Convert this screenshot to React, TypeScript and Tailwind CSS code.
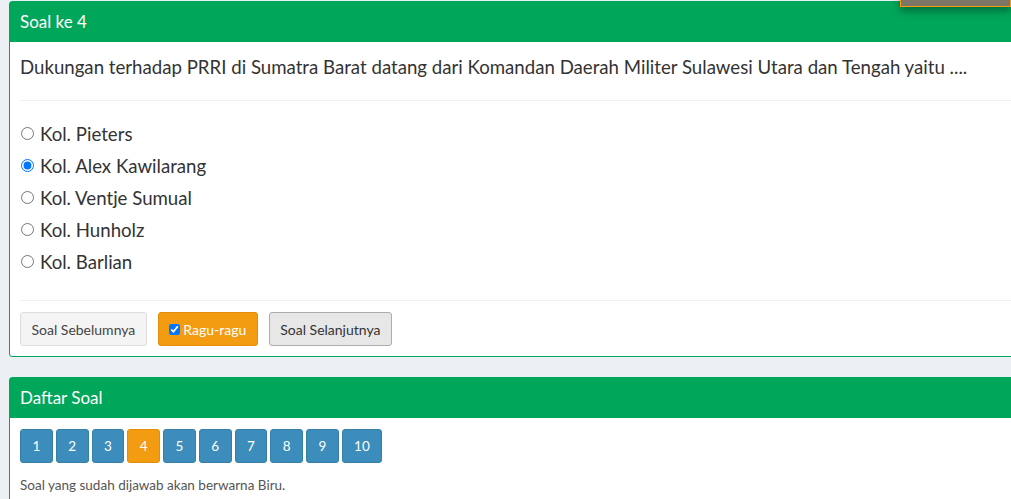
const options = [
  "Kol. Pieters",
  "Kol. Alex Kawilarang",
  "Kol. Ventje Sumual",
  "Kol. Hunholz",
  "Kol. Barlian",
];

const numbers = [1, 2, 3, 4, 5, 6, 7, 8, 9, 10];

export default function App() {
  return (
    <div
      className="relative h-[499px] w-[1011px] overflow-hidden bg-[#ecf0f5] text-[#333]"
      style={{ fontFamily: "Lato, 'Open Sans', sans-serif" }}
    >
      {/* soal */}
      <div className="ml-[9px] mt-px w-[1100px] rounded-[3px] border border-[#00a65a] bg-white">
        <div className="flex h-[40px] items-center bg-[#00a65a] px-[10px] text-[17px] text-white">
          Soal ke 4
        </div>
        <div className="px-[10px] pt-[12px]">
          <p className="text-[18.65px] leading-[26px]">
            Dukungan terhadap PRRI di Sumatra Barat datang dari Komandan Daerah Militer Sulawesi Utara dan Tengah yaitu ....
          </p>
          <div className="mt-[20px] border-t border-[#f0f0f0]" />
          <div className="flex flex-col pt-[18px] pb-[21px]">
            {options.map((o, i) => (
              <label key={o} className="flex h-[32px] items-center gap-[6px] text-[18.65px]">
                <input
                  type="radio"
                  name="jawab"
                  defaultChecked={i === 1}
                  className="m-0 ml-[1px] h-[13px] w-[13px] -translate-y-[2px]"
                />
                {o}
              </label>
            ))}
          </div>
          <div className="border-t border-[#f0f0f0]" />
          <div className="flex gap-[11px] pt-[11px] pb-[10px] text-[14px]">
            <button className="h-[34px] rounded-[3px] border border-[#ddd] bg-[#f4f4f4] px-[10.5px] text-[#444]">
              Soal Sebelumnya
            </button>
            <button className="flex h-[34px] items-center gap-[3px] rounded-[3px] border border-[#e08e0b] bg-[#f39c12] px-[10.5px] text-white">
              <input type="checkbox" defaultChecked className="m-0 h-[11px] w-[11px]" />
              Ragu-ragu
            </button>
            <button className="h-[34px] rounded-[3px] border border-[#adadad] bg-[#e7e7e7] px-[10.5px] text-[#333]">
              Soal Selanjutnya
            </button>
          </div>
        </div>
      </div>

      {/* daftar soal */}
      <div className="ml-[9px] mt-[20px] w-[1100px] rounded-[3px] border border-[#00a65a] bg-white">
        <div className="flex h-[40px] items-center bg-[#00a65a] px-[10px] text-[17px] text-white">
          Daftar Soal
        </div>
        <div className="px-[10px] pt-[11px] pb-[10px]">
          <div className="flex gap-[3px]">
            {numbers.map((n) => (
              <div
                key={n}
                className={
                  n === 4
                    ? "flex h-[34px] w-[32.78px] items-center justify-center rounded-[3px] border border-[#e08e0b] bg-[#f39c12] text-[13.5px] text-white"
                    : n === 10
                      ? "flex h-[34px] w-[40px] items-center justify-center rounded-[3px] border border-[#367fa9] bg-[#3c8dbc] text-[13.5px] text-white"
                      : "flex h-[34px] w-[32.78px] items-center justify-center rounded-[3px] border border-[#367fa9] bg-[#3c8dbc] text-[13.5px] text-white"
                }
              >
                {n}
              </div>
            ))}
          </div>
          <p className="mt-[12px] text-[13.5px] text-[#555]">Soal yang sudah dijawab akan berwarna Biru.</p>
        </div>
      </div>

      {/* overlay di kanan atas */}
      <div className="absolute right-0 top-[-30px] h-[37px] w-[111px] border border-[#f39c12] bg-[#7d7565] shadow-[0_4px_8px_rgba(0,0,0,0.35)]" />
    </div>
  );
}
